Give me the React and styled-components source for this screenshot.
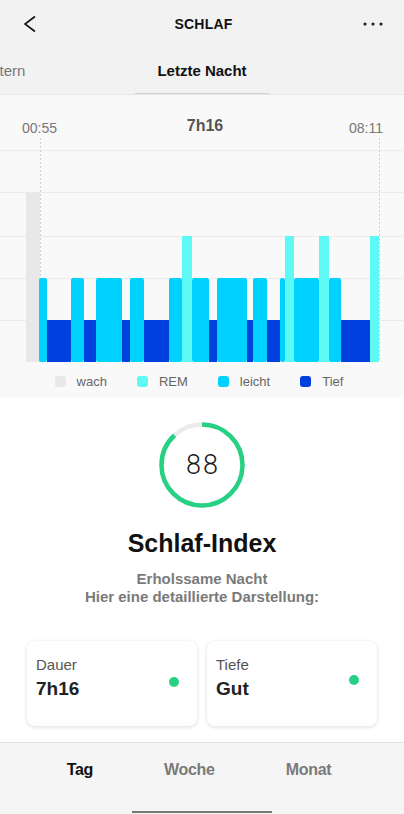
import React from "react";
import styled, { createGlobalStyle } from "styled-components";

const GlobalStyle = createGlobalStyle`
  body {
    margin: 0;
    background: #ffffff;
    font-family: "Liberation Sans", Arial, sans-serif;
  }
  * {
    box-sizing: border-box;
  }
`;

const STAGE_COLORS = {
  wach: "#e8e8e8",
  rem: "#5ef9f5",
  leicht: "#00d2ff",
  tief: "#0040df",
};

// plot coordinates: svg starts at y=138 of the page
const STAGE_TOP = { wach: 54, rem: 98, leicht: 140, tief: 182 };
const BASE = 224;

const segments = [
  ["wach", 26, 40],
  ["leicht", 39, 47],
  ["tief", 47, 71],
  ["leicht", 71, 84],
  ["tief", 84, 96],
  ["leicht", 96, 122],
  ["tief", 122, 130],
  ["leicht", 130, 144],
  ["tief", 144, 169],
  ["leicht", 169, 182],
  ["rem", 182, 192],
  ["leicht", 192, 209],
  ["tief", 209, 217],
  ["leicht", 217, 247],
  ["tief", 247, 253],
  ["leicht", 253, 267],
  ["tief", 267, 280],
  ["leicht", 280, 285],
  ["rem", 285, 294],
  ["leicht", 294, 319],
  ["rem", 319, 329],
  ["leicht", 329, 341],
  ["tief", 341, 370],
  ["rem", 370, 379],
];

const drawOrder = ["wach", "tief", "leicht", "rem"];

const legend = [
  { key: "wach", label: "wach" },
  { key: "rem", label: "REM" },
  { key: "leicht", label: "leicht" },
  { key: "tief", label: "Tief" },
];

function SleepChart() {
  return (
    <PlotSvg width="404" height="228" viewBox="0 0 404 228">
      {[12, 54, 98, 140, 182].map((y) => (
        <line key={y} x1="0" x2="404" y1={y + 0.5} y2={y + 0.5} stroke="#ebebeb" />
      ))}
      <line x1="40.5" x2="40.5" y1="0" y2={BASE} stroke="#cfcfcf" strokeDasharray="2 2" />
      <line x1="379.5" x2="379.5" y1="0" y2={BASE} stroke="#cfcfcf" strokeDasharray="2 2" />
      {drawOrder.map((stage) =>
        segments
          .filter((s) => s[0] === stage)
          .map(([st, x0, x1]) => (
            <rect
              key={st + x0}
              x={x0}
              y={STAGE_TOP[st]}
              width={x1 - x0}
              height={BASE - STAGE_TOP[st]}
              rx={st === "leicht" ? 2 : 0}
              fill={STAGE_COLORS[st]}
            />
          ))
      )}
    </PlotSvg>
  );
}

function ScoreRing({ value }) {
  const r = 40.5;
  const c = 2 * Math.PI * r;
  return (
    <RingBox>
      <svg width="88" height="88" viewBox="0 0 88 88">
        <circle cx="44" cy="44" r={r} fill="none" stroke="#ececec" strokeWidth="4.5" />
        <circle
          cx="44"
          cy="44"
          r={r}
          fill="none"
          stroke="#27d184"
          strokeWidth="4.5"
          strokeDasharray={`${(c * value) / 100} ${c}`}
          transform="rotate(-90 44 44)"
        />
      </svg>
      <RingValue>{value}</RingValue>
    </RingBox>
  );
}

export default function App() {
  return (
    <Page>
      <GlobalStyle />
      <Header>
        <svg width="12" height="18" viewBox="0 0 12 18">
          <polyline points="11,1.5 1,9 11,16.5" fill="none" stroke="#111" strokeWidth="1.6" />
        </svg>
        <Title>SCHLAF</Title>
        <MoreIcon width="20" height="4" viewBox="0 0 20 4">
          <circle cx="2" cy="2" r="1.6" fill="#222" />
          <circle cx="10" cy="2" r="1.6" fill="#222" />
          <circle cx="18" cy="2" r="1.6" fill="#222" />
        </MoreIcon>
      </Header>

      <TopTabs>
        <TopTab $side>Gestern</TopTab>
        <TopTab $active>Letzte Nacht</TopTab>
        <span />
      </TopTabs>

      <ChartSection>
        <TimeRow>
          <TimeLabel>00:55</TimeLabel>
          <Duration>7h16</Duration>
          <TimeLabel>08:11</TimeLabel>
        </TimeRow>
        <SleepChart />
        <Legend>
          {legend.map((l) => (
            <LegendItem key={l.key}>
              <Swatch $color={STAGE_COLORS[l.key]} />
              {l.label}
            </LegendItem>
          ))}
        </Legend>
      </ChartSection>

      <Summary>
        <ScoreRing value={88} />
        <IndexTitle>Schlaf-Index</IndexTitle>
        <Subtitle>
          Erholssame Nacht
          <br />
          Hier eine detaillierte Darstellung:
        </Subtitle>
        <Cards>
          <Card>
            <CardLabel>Dauer</CardLabel>
            <CardValue>7h16</CardValue>
            <Dot $top={41} />
          </Card>
          <Card>
            <CardLabel>Tiefe</CardLabel>
            <CardValue>Gut</CardValue>
            <Dot $top={39} />
          </Card>
        </Cards>
      </Summary>

      <BottomBar>
        <PeriodTabs>
          <PeriodTab $active>Tag</PeriodTab>
          <PeriodTab>Woche</PeriodTab>
          <PeriodTab>Monat</PeriodTab>
        </PeriodTabs>
        <HomeIndicator />
      </BottomBar>
    </Page>
  );
}

const Page = styled.div`
  width: 404px;
  height: 814px;
  overflow: hidden;
  display: flex;
  flex-direction: column;
  background: #ffffff;
`;

const Header = styled.div`
  height: 48px;
  flex: none;
  display: grid;
  grid-template-columns: 1fr auto 1fr;
  align-items: center;
  padding: 0 21px 0 24px;
  background: #f2f2f2;
`;

const Title = styled.div`
  font-size: 14px;
  font-weight: 700;
  color: #111;
  letter-spacing: 0.2px;
`;

const MoreIcon = styled.svg`
  justify-self: end;
`;

const TopTabs = styled.div`
  height: 47px;
  flex: none;
  display: grid;
  grid-template-columns: 1fr 134px 1fr;
  background: #f2f2f2;
  border-bottom: 1px solid #e6e6e6;
  overflow: hidden;
`;

const TopTab = styled.div`
  display: flex;
  align-items: center;
  justify-content: ${(p) => (p.$side ? "flex-start" : "center")};
  margin-left: ${(p) => (p.$side ? "-28px" : "0")};
  font-size: 15px;
  font-weight: ${(p) => (p.$active ? 700 : 400)};
  color: ${(p) => (p.$active ? "#111" : "#777")};
  border-bottom: 2px solid ${(p) => (p.$active ? "#d2d2d2" : "transparent")};
  margin-bottom: -1px;
`;

const ChartSection = styled.div`
  height: 303px;
  flex: none;
  display: flex;
  flex-direction: column;
  background: #f9f9f9;
`;

const TimeRow = styled.div`
  height: 43px;
  display: flex;
  justify-content: space-between;
  align-items: flex-start;
  padding: 24px 21px 0 22px;
`;

const TimeLabel = styled.span`
  font-size: 14px;
  line-height: 18px;
  color: #777;
`;

const Duration = styled.span`
  font-size: 16px;
  line-height: 18px;
  font-weight: 700;
  color: #555;
  margin-top: -2px;
  margin-left: 4px;
`;

const PlotSvg = styled.svg`
  display: block;
  flex: none;
`;

const Legend = styled.div`
  height: 30px;
  display: flex;
  align-items: center;
  justify-content: center;
  gap: 30px;
  padding-right: 6px;
`;

const LegendItem = styled.div`
  display: flex;
  align-items: center;
  gap: 11px;
  font-size: 13px;
  color: #666;
`;

const Swatch = styled.span`
  width: 11px;
  height: 11px;
  border-radius: 3px;
  background: ${(p) => p.$color};
`;

const Summary = styled.div`
  flex: 1;
  display: flex;
  flex-direction: column;
  align-items: center;
  padding-top: 23px;
`;

const RingBox = styled.div`
  position: relative;
  width: 88px;
  height: 88px;
  svg {
    display: block;
  }
`;

const RingValue = styled.div`
  position: absolute;
  inset: 0;
  display: flex;
  align-items: center;
  justify-content: center;
  font-family: Roboto, "Liberation Sans", sans-serif;
  font-weight: 300;
  font-size: 27px;
  letter-spacing: 2px;
  color: #1a1a1a;
  padding-left: 2px;
`;

const IndexTitle = styled.div`
  margin-top: 19px;
  font-size: 25px;
  line-height: 30px;
  font-weight: 700;
  color: #111;
`;

const Subtitle = styled.div`
  margin-top: 12px;
  font-size: 15px;
  line-height: 18px;
  font-weight: 700;
  color: #7a7a7a;
  text-align: center;
`;

const Cards = styled.div`
  margin-top: 35px;
  display: flex;
  gap: 10px;
`;

const Card = styled.div`
  position: relative;
  width: 170px;
  height: 85px;
  padding: 15px 9px 0;
  border-radius: 8px;
  background: #fff;
  box-shadow: 0 1px 4px rgba(0, 0, 0, 0.14);
`;

const CardLabel = styled.div`
  font-size: 15px;
  line-height: 18px;
  color: #555;
`;

const CardValue = styled.div`
  margin-top: 3px;
  font-size: 19px;
  line-height: 24px;
  font-weight: 700;
  color: #222;
`;

const Dot = styled.span`
  position: absolute;
  right: 18px;
  top: ${(p) => p.$top - 5}px;
  width: 10px;
  height: 10px;
  border-radius: 50%;
  background: #27d184;
`;

const BottomBar = styled.div`
  height: 72px;
  flex: none;
  display: flex;
  flex-direction: column;
  align-items: center;
  border-top: 1px solid #e2e2e2;
  background: #f5f5f5;
`;

const PeriodTabs = styled.div`
  width: 100%;
  display: flex;
  justify-content: center;
  gap: 71px;
  padding: 17px 6px 0 0;
`;

const PeriodTab = styled.div`
  font-size: 16px;
  line-height: 20px;
  font-weight: 700;
  letter-spacing: -0.3px;
  color: ${(p) => (p.$active ? "#111" : "#7a7a7a")};
`;

const HomeIndicator = styled.div`
  margin-top: auto;
  margin-bottom: 1px;
  width: 140px;
  height: 2px;
  background: #777;
`;
